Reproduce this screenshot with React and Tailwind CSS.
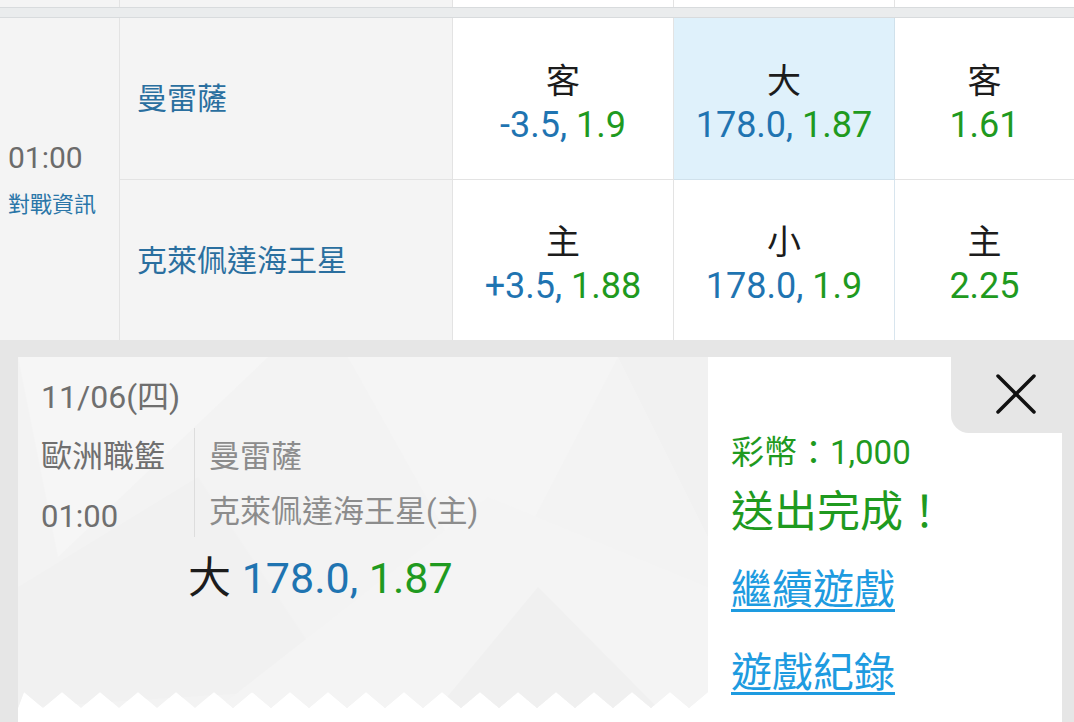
import React from "react";

const odds = [
  [
    { label: "客", line: "-3.5", price: "1.9" },
    { label: "大", line: "178.0", price: "1.87", active: true },
    { label: "客", price: "1.61", last: true },
  ],
  [
    { label: "主", line: "+3.5", price: "1.88" },
    { label: "小", line: "178.0", price: "1.9", soft: true },
    { label: "主", price: "2.25", last: true },
  ],
];

function OddsCell({ label, line, price, active, soft, last, bottom }) {
  let cls = "bg-white border-[#e3e3e3]";
  if (active) cls = "bg-[#dff1fb] border-[#d0e1eb]";
  if (soft) cls = "bg-white border-[#d8e5ee]";
  return (
    <div
      className={`flex flex-col items-center justify-center pt-[8px] ${cls} ${last ? "" : "border-r"} ${bottom ? "border-b" : ""}`}
    >
      <div className="text-[34px] leading-[44px] text-[#1c1c1c]">{label}</div>
      <div className="text-[36px] leading-[44px] whitespace-nowrap">
        {line && <span className="text-[#1f74b1]">{line}, </span>}
        <span className="text-[#1f9a1f]">{price}</span>
      </div>
    </div>
  );
}

function TicketBg() {
  // zigzag bottom edge of the ticket
  const pts = ["0,0", "690,0", "690,351"];
  for (let x = 690; x > 0; x -= 19) {
    const k = Math.round((x - 1) / 19);
    pts.push(`${x},${k % 2 === 0 ? 335 : 351}`);
  }
  pts.push("0,351");
  const shape = pts.join(" ");
  return (
    <svg className="absolute inset-0" width="690" height="365" viewBox="0 0 690 365">
      <defs>
        <clipPath id="ticket">
          <polygon points={shape} />
        </clipPath>
      </defs>
      <polygon points={shape} fill="#f3f3f3" />
      <g clipPath="url(#ticket)">
        <polygon points="0,0 250,0 40,200" fill="#f6f6f6" />
        <polygon points="330,0 600,0 470,250" fill="#f5f5f5" />
        <polygon points="0,230 180,120 320,330 0,351" fill="#f1f1f1" />
        <polygon points="200,351 470,140 690,230 690,351" fill="#f4f4f4" />
        <polygon points="600,0 690,0 690,180" fill="#f1f1f1" />
        <polygon points="420,351 520,230 640,351" fill="#f0f0f0" />
      </g>
    </svg>
  );
}

export default function App() {
  return (
    <div className="w-[1074px] h-[722px] overflow-hidden bg-white font-['Roboto','Noto_Sans_CJK_TC',sans-serif]">
      {/* tail of previous match */}
      <div className="grid grid-cols-[120px_333px_221px_221px_1fr] h-[7px]">
        <div className="bg-[#f4f4f4] border-r border-[#e3e3e3]" />
        <div className="bg-[#f4f4f4] border-r border-[#e3e3e3]" />
        <div className="bg-white border-r border-[#e3e3e3]" />
        <div className="bg-white border-r border-[#e3e3e3]" />
        <div className="bg-white" />
      </div>
      <div className="h-[11px] bg-[#eaeced] border-y border-[#d8dbdd]" />

      {/* match table */}
      <div className="grid grid-cols-[120px_333px_221px_221px_1fr] grid-rows-[162px_160px]">
        <div className="row-span-2 bg-[#f4f4f4] border-r border-[#e3e3e3] flex flex-col justify-center pl-2">
          <div className="text-[30px] leading-[40px] text-[#6b6b6b]">01:00</div>
          <div className="text-[22px] leading-[30px] text-[#2a76a8] mt-[12px]">對戰資訊</div>
        </div>

        <div className="bg-[#f4f4f4] border-r border-b border-[#e3e3e3] flex items-center pl-[17px] text-[30px] text-[#2a6f9f]">
          曼雷薩
        </div>
        {odds[0].map((o, i) => (
          <OddsCell key={i} {...o} bottom />
        ))}

        <div className="bg-[#f4f4f4] border-r border-[#e3e3e3] flex items-center pl-[17px] text-[30px] text-[#2a6f9f]">
          克萊佩達海王星
        </div>
        {odds[1].map((o, i) => (
          <OddsCell key={i} {...o} />
        ))}
      </div>

      {/* bet ticket */}
      <div className="relative h-[383px] bg-[#e6e6e6] pt-[17px] pl-[18px] pr-[12px] flex">
        <div className="relative w-[690px] h-[366px] bg-white">
          <TicketBg />
          <div className="relative pl-[23px] pt-[20px]">
            <div className="text-[32px] leading-[40px] text-[#6f6f6f]">11/06(四)</div>
            <div className="flex mt-[11px]">
              <div className="w-[153px] flex flex-col pt-[9px] gap-[20px] text-[31px] leading-[40px] text-[#6f6f6f]">
                <div>歐洲職籃</div>
                <div>01:00</div>
              </div>
              <div className="border-l border-[#dddddd] pl-[14px] pt-[9px] flex flex-col gap-[15px] text-[31px] leading-[40px] text-[#8c8c8c]">
                <div>曼雷薩</div>
                <div>克萊佩達海王星(主)</div>
              </div>
            </div>
            <div className="ml-[147px] mt-[16px] text-[43px] leading-[50px] whitespace-nowrap">
              <span className="text-[#1c1c1c]">大 </span>
              <span className="text-[#1f74b1]">178.0, </span>
              <span className="text-[#1f9a1f]">1.87</span>
            </div>
          </div>
        </div>

        <div className="flex-1 bg-white pl-[23px] pt-[76px] flex flex-col items-start">
          <div className="text-[33px] leading-[40px] text-[#1f9a1f]">彩幣：1,000</div>
          <div className="mt-[14px] text-[43px] leading-[50px] text-[#1f9a1f]">送出完成！</div>
          <a href="#" className="mt-[28px] text-[41px] leading-[50px] text-[#1e9be0] underline decoration-[3px] underline-offset-[5px]">
            繼續遊戲
          </a>
          <a href="#" className="mt-[33px] text-[41px] leading-[50px] text-[#1e9be0] underline decoration-[3px] underline-offset-[5px]">
            遊戲紀錄
          </a>
        </div>

        <button className="absolute top-0 right-0 w-[123px] h-[93px] bg-[#e6e6e6] rounded-bl-[18px] flex items-start justify-start">
          <svg className="ml-[45px] mt-[34px]" width="40" height="40" viewBox="0 0 40 40">
            <line x1="2" y1="2" x2="38" y2="38" stroke="#111" strokeWidth="3.5" strokeLinecap="round" />
            <line x1="38" y1="2" x2="2" y2="38" stroke="#111" strokeWidth="3.5" strokeLinecap="round" />
          </svg>
        </button>
      </div>
    </div>
  );
}
